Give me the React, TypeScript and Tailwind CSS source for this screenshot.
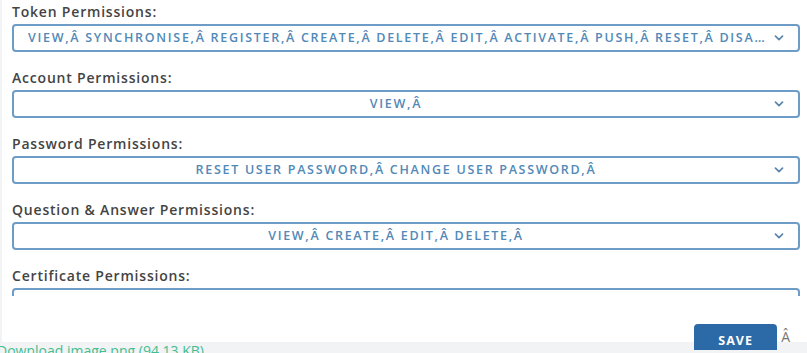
import React from "react";

const groups = [
  {
    label: "Token Permissions:",
    value:
      "VIEW,Â SYNCHRONISE,Â REGISTER,Â CREATE,Â DELETE,Â EDIT,Â ACTIVATE,Â PUSH,Â RESET,Â DISABLE,Â ENABLE,Â ASSIGN,Â",
    truncate: true,
  },
  { label: "Account Permissions:", value: "VIEW,Â" },
  { label: "Password Permissions:", value: "RESET USER PASSWORD,Â CHANGE USER PASSWORD,Â" },
  { label: "Question & Answer Permissions:", value: "VIEW,Â CREATE,Â EDIT,Â DELETE,Â" },
  { label: "Certificate Permissions:", value: "" },
];

function Chevron() {
  return (
    <svg width="10" height="6" viewBox="0 0 10 6" className="shrink-0">
      <path d="M1.5 1.2 L5 4.6 L8.5 1.2" fill="none" stroke="#5a86ad" strokeWidth="1.7" strokeLinecap="round" strokeLinejoin="round" />
    </svg>
  );
}

export default function App() {
  return (
    <div
      className="w-[807px] h-[353px] overflow-hidden bg-[#f2f3f5]"
      style={{ fontFamily: "'Open Sans', 'Liberation Sans', sans-serif" }}
    >
      <div className="ml-[2px] h-[342px] bg-white flex flex-col">
        <div className="h-[296px] overflow-hidden pl-[10px] pr-[7px] pt-[2px] shrink-0">
          {groups.map((g) => (
            <div key={g.label} className="mb-[16px]">
              <div className="text-[14px] leading-[20px] font-semibold tracking-[0.8px] text-[#444444] mb-[2px]">
                {g.label}
              </div>
              <div className="h-[28px] border-2 border-[#6d9cc6] rounded-[4px] flex items-center pl-[14px] pr-[14px]">
                <div
                  className={
                    "flex-1 min-w-0 text-[12.5px] font-semibold tracking-[1.7px] text-[#5189b7] whitespace-nowrap overflow-hidden text-ellipsis " +
                    (g.truncate ? "text-left" : "text-center pr-[2px]")
                  }
                >
                  {g.value}
                </div>
                <div className="ml-[8px]">
                  <Chevron />
                </div>
              </div>
            </div>
          ))}
        </div>
        <div className="flex justify-end items-start pt-[28px] pr-[17px]">
          <button className="w-[83px] h-[26px] bg-[#2c6aa7] rounded-t-[4px] text-white text-[12.5px] font-bold tracking-[1px] pt-[8px] leading-[14px]">
            SAVE
          </button>
          <span className="ml-[4px] mt-[5px] text-[14px] text-[#777] leading-[16px]">Â</span>
        </div>
      </div>
      <div className="-ml-[3px] text-[14px] leading-[18px] text-[#46bd91] whitespace-nowrap">
        Download image.png (94.13 KB)
      </div>
    </div>
  );
}
